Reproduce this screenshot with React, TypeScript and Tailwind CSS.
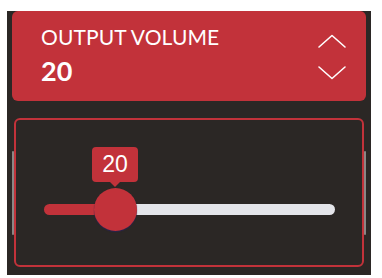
const RED = "bg-[#c2323a]";

function Chevron({ up }: { up: boolean }) {
  return (
    <svg width="30" height="15" viewBox="0 0 30 15" fill="none">
      <path
        d={up ? "M2 13 L15 1.5 L28 13" : "M2 2 L15 13.5 L28 2"}
        stroke="#fff"
        strokeWidth="1.6"
        strokeLinecap="round"
        strokeLinejoin="round"
      />
    </svg>
  );
}

function VolumeHeader({ value }: { value: number }) {
  return (
    <div className={`mx-[5px] mt-[5px] h-[90px] rounded-[6px] ${RED} flex items-center justify-between pl-[29px] pr-[19px]`}>
      <div className="flex flex-col text-white font-['Lato',sans-serif] -mt-[1px]">
        <span className="text-[21px] leading-[24px] tracking-[0.1px]">OUTPUT VOLUME</span>
        <span className="text-[27px] leading-[32px] font-bold mt-[6px]">{value}</span>
      </div>
      <div className="flex flex-col gap-[16px] mt-[1px]">
        <Chevron up />
        <Chevron up={false} />
      </div>
    </div>
  );
}

function VolumeSlider({ value }: { value: number }) {
  return (
    <div className="mt-[17px] flex items-center">
      <div className="w-[2px] h-[84px] bg-[#8a8786] rounded-full" />
      <div className="flex-1 h-[149px] border-2 border-[#c2323a] rounded-[6px] flex flex-col pt-[27px] pl-[28px] pr-[27px]">
        <div className="ml-[48px] flex flex-col items-center w-[46px]">
          <div className={`w-[46px] h-[35px] rounded-[4px] ${RED} flex items-center justify-center text-white text-[23px] font-['Liberation_Sans',sans-serif]`}>
            {value}
          </div>
          <div className="w-0 h-0 border-x-[5px] border-x-transparent border-t-[5px] border-t-[#c2323a]" />
        </div>
        <div className="flex items-center h-[43px] mt-[1px]">
          <div className={`w-[60px] h-[11px] rounded-l-full ${RED}`} />
          <div className={`w-[43px] h-[43px] rounded-full ${RED} shadow-[0_1px_1px_#2a2250] -mx-[10px] z-10`} />
          <div className="flex-1 h-[11px] rounded-r-full bg-[#e4e5ea]" />
        </div>
      </div>
      <div className="w-[2px] h-[84px] bg-[#8a8786] rounded-full" />
    </div>
  );
}

export default function App() {
  return (
    <div className="w-[382px] h-[278px] bg-white pt-[6px]">
      <div className="ml-[7px] w-[364px] h-[264px] bg-[#2b2725]">
        <VolumeHeader value={20} />
        <div className="px-[5px]">
          <VolumeSlider value={20} />
        </div>
      </div>
    </div>
  );
}
